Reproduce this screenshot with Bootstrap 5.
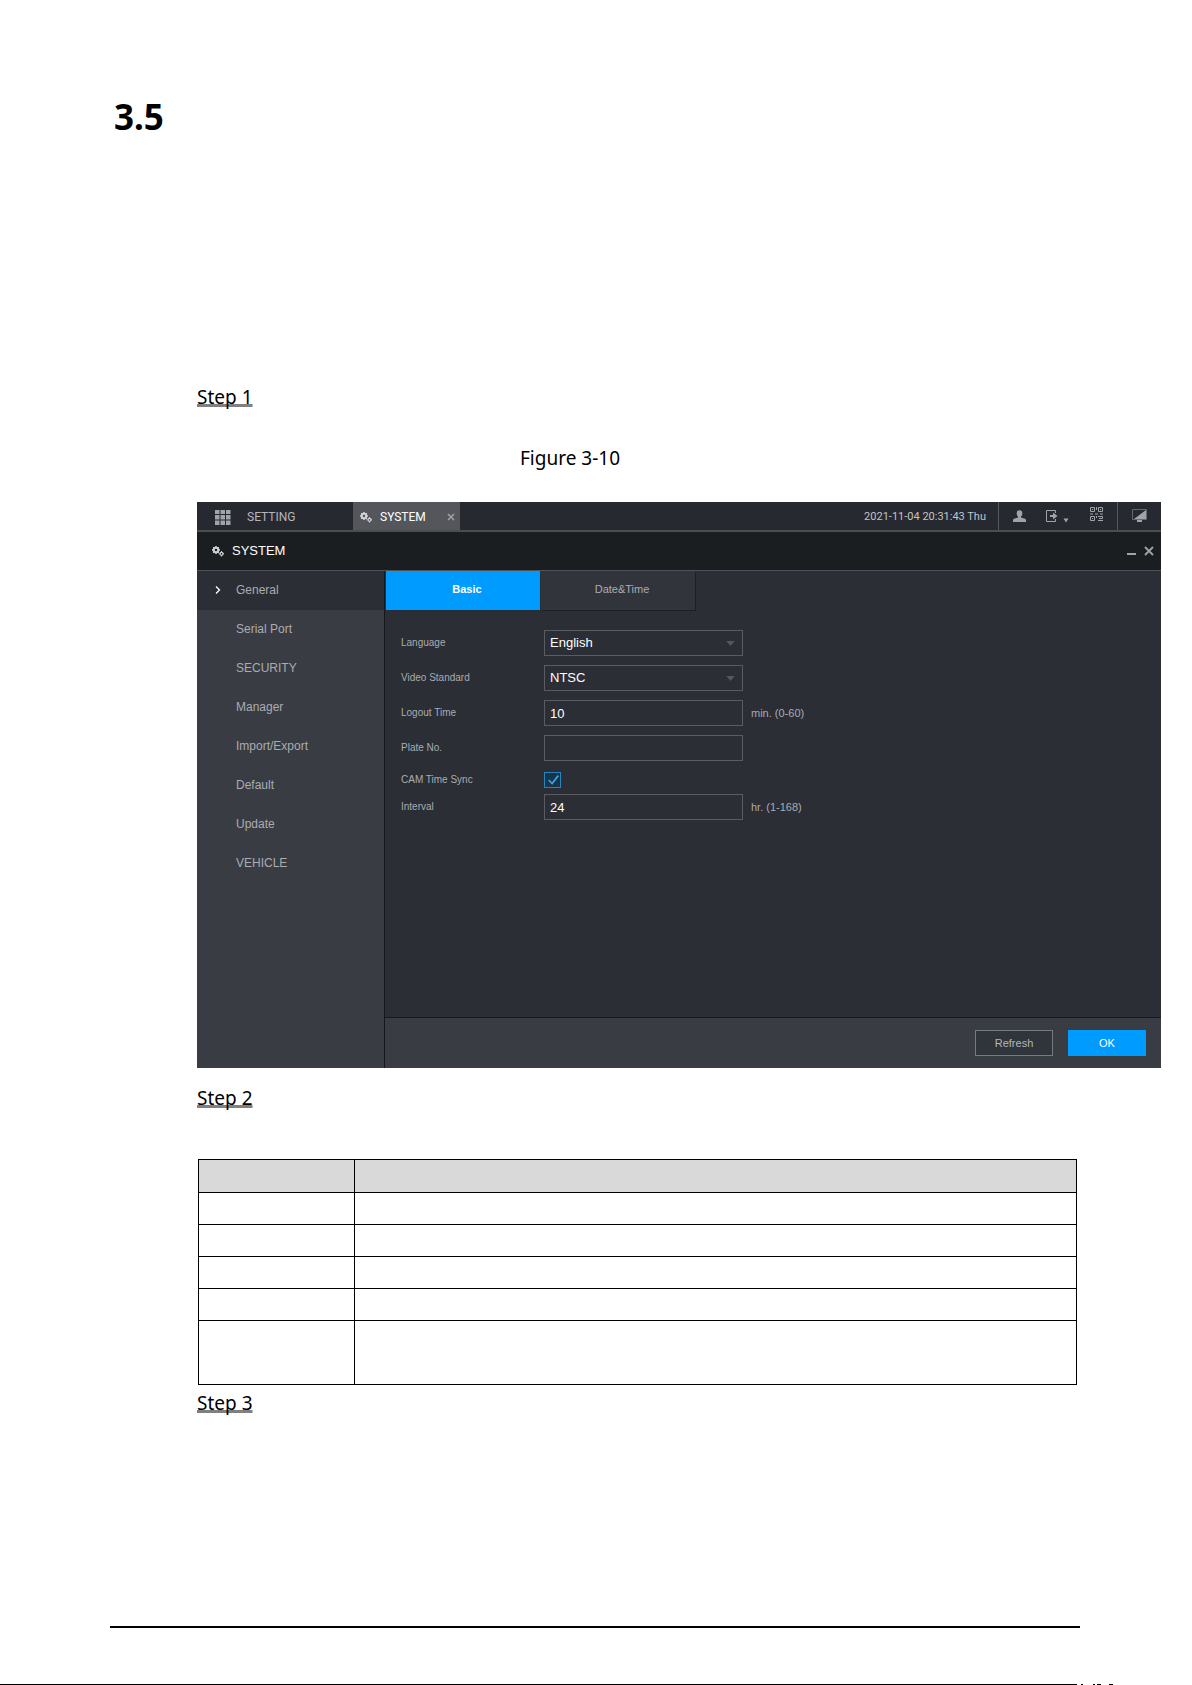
<!DOCTYPE html>
<html lang="en">
<head>
    <meta charset="UTF-8">
    <meta name="viewport" content="width=device-width, initial-scale=1.0">
    <title>3.5 System Settings</title>
    <!-- Bootstrap CSS -->
    <link href="https://cdn.jsdelivr.net/npm/bootstrap@5.3.0/dist/css/bootstrap.min.css" rel="stylesheet">
    <!-- Custom CSS -->
    <style>
        body {
            background-color: #fff;
            color: #000;
            font-family: 'Noto Sans', sans-serif;
        }
        .sheet {
            min-height: 100vh;
        }
        .sheet-body {
            padding: 93px 31px 0 114px;
        }
        .section-no {
            font-size: 35px;
            font-weight: 700;
            line-height: 48px;
            margin-bottom: 238px;
        }
        .steps {
            padding-left: 83px;
        }
        .step-title {
            font-size: 19px;
            font-weight: 400;
            line-height: 36px;
            margin: 0;
            text-decoration: underline 3px #808080;
            text-decoration-skip-ink: none;
            text-underline-offset: 0;
        }
        .figure-title {
            font-size: 19px;
            line-height: 36px;
            margin: 25px 0 26px;
            padding-left: 323px;
        }

        /* Recorder window */
        .dvr {
            background-color: #2b2e35;
            color: #a9acb1;
            font-family: 'Liberation Sans', Arial, sans-serif;
            font-size: 12px;
            line-height: 16px;
            margin-bottom: 12px;
        }
        .dvr button, .dvr input, .dvr select {
            font-family: inherit;
            border-radius: 0;
        }
        .icon-btn {
            background: none;
            border: 0;
            padding: 0;
            color: #a0a3a8;
            display: flex;
            align-items: center;
        }
        .top-bar {
            height: 30px;
            background-color: #272931;
            border-bottom: 2px solid #4b4d50;
            font-family: Roboto, sans-serif;
        }
        .menu-link, .open-tab, .clock {
            padding-top: 2px;
        }
        .menu-link {
            color: #b4b6ba;
            text-decoration: none;
            padding-left: 18px;
            width: 156px;
            gap: 16px;
        }
        .open-tab {
            background-color: #54565b;
            color: #fff;
            width: 107px;
            padding-left: 7px;
            padding-right: 5px;
            gap: 8px;
        }
        .clock {
            font-size: 11px;
            padding-right: 12px;
            color: #c2c4c8;
        }
        .tools {
            border-left: 1px solid #55575b;
            padding: 0 14px;
            gap: 20px;
        }
        .title-bar {
            height: 39px;
            background-color: #1b1e21;
            border-bottom: 1px solid #505356;
            color: #fff;
            font-size: 13px;
            padding: 0 7px 0 15px;
            gap: 8px;
        }
        .gear-icon {
            color: #d0d2d5;
        }
        .side-menu {
            width: 188px;
            background-color: #3a3c44;
            border-right: 1px solid #15171a;
        }
        .side-menu a {
            display: flex;
            align-items: center;
            height: 39px;
            padding: 0 0 2px 39px;
            color: #a9acb1;
            text-decoration: none;
        }
        .side-menu a.current {
            background-color: #2b2e35;
            padding-left: 18px;
            gap: 15px;
        }
        .main-area {
            min-height: 497px;
        }
        .page-tabs {
            gap: 1px;
            padding-left: 1px;
        }
        .page-tabs button {
            width: 154px;
            height: 39px;
            padding: 0 0 4px 8px;
            border: 0;
            font-size: 11px;
            color: #a9acb1;
            background-color: #32343c;
            box-shadow: 1px 1px 0 #1d1f24;
        }
        .page-tabs button.current {
            background-color: #009bff;
            color: #fff;
            font-weight: 700;
            box-shadow: none;
        }
        .settings {
            padding: 20px 16px;
        }
        .field-row {
            min-height: 26px;
            margin-bottom: 9px;
            font-size: 11px;
        }
        .field-row label {
            width: 143px;
            font-size: 10px;
        }
        .field-row .form-control, .field-row .form-select {
            width: 199px;
            height: 26px;
            padding: 0 5px;
            margin-right: 8px;
            font-size: 13px;
            line-height: 16px;
            color: #fff;
            background-color: #2b2e35;
            border: 1px solid #5a5c62;
        }
        .field-row .form-select {
            background-image: url("data:image/svg+xml,%3Csvg xmlns='http://www.w3.org/2000/svg' viewBox='0 0 10 6'%3E%3Cpath fill='%2355585e' d='M0 0h10L5 6z'/%3E%3C/svg%3E");
            background-size: 9px 5px;
            background-position: right 7px center;
        }
        .field-row.sync-row {
            min-height: 16px;
            margin: 11px 0 6px;
        }
        .sync-row .form-check-input {
            width: 17px;
            height: 16px;
            margin: 0;
            background-color: #173448;
            border: 1px solid #2785bd;
        }
        .sync-row .form-check-input[type=checkbox] {
            border-radius: 0;
        }
        .sync-row .form-check-input:checked {
            background-image: url("data:image/svg+xml,%3Csvg xmlns='http://www.w3.org/2000/svg' viewBox='0 0 16 16'%3E%3Cpath fill='none' stroke='%233da3e3' stroke-width='2' d='M3 8l4 4 7-9'/%3E%3C/svg%3E");
        }
        .action-bar {
            height: 51px;
            background-color: #3a3c44;
            border-top: 1px solid #15171a;
            padding-right: 15px;
            gap: 15px;
        }
        .action-bar .btn {
            width: 78px;
            height: 26px;
            padding: 0;
            font-size: 11px;
            color: #b4b6ba;
            background-color: #30343b;
            border: 1px solid #777a7f;
        }
        .action-bar .btn.btn-ok {
            color: #fff;
            background-color: #009bff;
            border-color: #009bff;
        }

        /* Parameter table */
        .param-table {
            width: calc(100% - 85px);
            margin: 43px 0 0 1px;
            border-collapse: collapse;
            table-layout: fixed;
        }
        .param-table th, .param-table td {
            border: 1px solid #000;
            height: 32px;
            padding: 0;
        }
        .param-table th {
            background-color: #d9d9d9;
            height: 33px;
        }
        .param-table tr.tall td {
            height: 64px;
        }
        .name-col {
            width: 156px;
        }
        .foot-rule {
            margin: 0 112px 56px 110px;
            border-top: 2px solid #000;
        }
        .edge-line {
            height: 1px;
        }
        .edge-line div {
            background-color: #000;
        }
        .edge-line svg {
            width: 115px;
        }
    </style>
</head>
<body>

<!-- Shared icon -->
<svg width="0" height="0" class="d-none">
    <symbol id="gears" viewBox="0 0 24 22">
        <circle cx="8" cy="8" r="4.5" fill="none" stroke="currentColor" stroke-width="4"/>
        <path d="M8 0v3M8 13v3M0 8h3M13 8h3M2.500 2.500l2 2M11.500 11.500l2 2M2.500 13.500l2-2M11.500 4.500l2-2" stroke="currentColor" stroke-width="3"/>
        <circle cx="19" cy="15.500" r="3" fill="none" stroke="currentColor" stroke-width="2.500"/>
        <path d="M19 10v2M19 19v2M13.500 15.500h2M22 15.500h2" stroke="currentColor" stroke-width="2"/>
    </symbol>
</svg>

<div class="sheet d-flex flex-column">
    <main class="sheet-body">
        <h1 class="section-no">3.5</h1>
        <div class="steps">
            <h2 class="step-title">Step 1</h2>
            <p class="figure-title">Figure 3-10</p>

            <section class="dvr">
                <div class="top-bar d-flex align-items-stretch">
                    <a href="#" class="menu-link d-flex align-items-center">
                        <svg width="16" height="15" viewBox="0 0 16 15" fill="#a0a3a8"><path d="M0 0h4.500v4H0zM5.500 0H10v4H5.500zM11 0h4.500v4H11zM0 5h4.500v4.500H0zM5.500 5H10v4.500H5.500zM11 5h4.500v4.500H11zM0 10.500h4.500v4.500H0zM5.500 10.500H10v4.500H5.500zM11 10.500h4.500v4.500H11z"/></svg>
                        SETTING
                    </a>
                    <div class="open-tab d-flex align-items-center">
                        <svg class="gear-icon" width="12" height="11"><use href="#gears"/></svg>
                        <span>SYSTEM</span>
                        <button type="button" class="icon-btn ms-auto" aria-label="Close tab">
                            <svg width="8" height="8" viewBox="0 0 8 8" stroke="currentColor" stroke-width="1.500"><path d="M1 1l6 6M7 1l-6 6"/></svg>
                        </button>
                    </div>
                    <div class="clock ms-auto d-flex align-items-center">2021-11-04 20:31:43 Thu</div>
                    <div class="tools d-flex">
                        <button type="button" class="icon-btn" aria-label="User">
                            <svg width="13" height="12" viewBox="0 0 13 12" fill="currentColor"><ellipse cx="6.500" cy="3.500" rx="2.800" ry="3.300"/><path d="M5 6h3v1.500l4 1.300q1 .4 1 1.600V12H0v-1.600q0-1.200 1-1.600l4-1.300z"/></svg>
                        </button>
                        <button type="button" class="icon-btn" aria-label="Log out">
                            <svg width="24" height="14" viewBox="0 0 24 14"><path d="M9.500 4V1.500h-9v11h9V10" fill="none" stroke="currentColor"/><path d="M4 6h3V3.500L11.500 7 7 10.500V8H4zM17.500 9.500h5l-2.500 4z" fill="currentColor"/></svg>
                        </button>
                        <button type="button" class="icon-btn pb-1" aria-label="QR code">
                            <svg width="13" height="14" viewBox="0 0 13 14" fill="none" stroke="currentColor"><path d="M.5 .5h4v4h-4zM8.500 .5h4v4h-4zM.5 9.500h4v4h-4zM2 2.500h1M10 2.500h1M2 11.500h1M0 7h3M5 7h3M10 7h3M6.500 0v3M6.500 9v2M8 9.500h4.500v2H9M8 13.500h5"/></svg>
                        </button>
                    </div>
                    <div class="tools d-flex">
                        <button type="button" class="icon-btn" aria-label="Display">
                            <svg width="15" height="14" viewBox="0 0 15 14"><path d="M.5 .5h14v10H.5z" fill="none" stroke="#65686d"/><path d="M14 1v9H2zM5 11h5v2H5z" fill="currentColor"/></svg>
                        </button>
                    </div>
                </div>

                <div class="title-bar d-flex align-items-center">
                    <svg class="gear-icon" width="12" height="11"><use href="#gears"/></svg>
                    <span>SYSTEM</span>
                    <button type="button" class="icon-btn ms-auto" aria-label="Minimize">
                        <svg width="9" height="10" viewBox="0 0 9 10" stroke="currentColor" stroke-width="2"><path d="M0 8h9"/></svg>
                    </button>
                    <button type="button" class="icon-btn" aria-label="Close">
                        <svg width="10" height="10" viewBox="0 0 10 10" stroke="currentColor" stroke-width="1.800"><path d="M1 1l8 8M9 1L1 9"/></svg>
                    </button>
                </div>

                <div class="d-flex">
                    <nav class="side-menu flex-shrink-0">
                        <a href="#" class="current">
                            <svg width="6" height="8" viewBox="0 0 6 8" fill="none" stroke="#fff" stroke-width="1.300"><path d="M1 .5L4.500 4 1 7.500"/></svg>
                            General
                        </a>
                        <a href="#">Serial Port</a>
                        <a href="#">SECURITY</a>
                        <a href="#">Manager</a>
                        <a href="#">Import/Export</a>
                        <a href="#">Default</a>
                        <a href="#">Update</a>
                        <a href="#">VEHICLE</a>
                    </nav>
                    <div class="main-area flex-grow-1 d-flex flex-column">
                        <div class="page-tabs d-flex">
                            <button type="button" class="current">Basic</button>
                            <button type="button">Date&amp;Time</button>
                        </div>
                        <form class="settings">
                            <div class="field-row d-flex align-items-center">
                                <label for="language">Language</label>
                                <select class="form-select" id="language">
                                    <option>English</option>
                                </select>
                            </div>
                            <div class="field-row d-flex align-items-center">
                                <label for="videoStandard">Video Standard</label>
                                <select class="form-select" id="videoStandard">
                                    <option>NTSC</option>
                                </select>
                            </div>
                            <div class="field-row d-flex align-items-center">
                                <label for="logoutTime">Logout Time</label>
                                <input type="text" class="form-control" id="logoutTime" value="10">
                                <span>min. (0-60)</span>
                            </div>
                            <div class="field-row d-flex align-items-center">
                                <label for="plateNo">Plate No.</label>
                                <input type="text" class="form-control" id="plateNo">
                            </div>
                            <div class="field-row sync-row d-flex align-items-center">
                                <label for="camSync">CAM Time Sync</label>
                                <input type="checkbox" class="form-check-input" id="camSync" checked>
                            </div>
                            <div class="field-row d-flex align-items-center">
                                <label for="interval">Interval</label>
                                <input type="text" class="form-control" id="interval" value="24">
                                <span>hr. (1-168)</span>
                            </div>
                        </form>
                        <div class="action-bar mt-auto d-flex justify-content-end align-items-center">
                            <button type="button" class="btn">Refresh</button>
                            <button type="button" class="btn btn-ok">OK</button>
                        </div>
                    </div>
                </div>
            </section>

            <h2 class="step-title">Step 2</h2>
            <table class="param-table">
                <colgroup>
                    <col class="name-col">
                    <col>
                </colgroup>
                <thead>
                    <tr><th></th><th></th></tr>
                </thead>
                <tbody>
                    <tr><td></td><td></td></tr>
                    <tr><td></td><td></td></tr>
                    <tr><td></td><td></td></tr>
                    <tr><td></td><td></td></tr>
                    <tr class="tall"><td></td><td></td></tr>
                </tbody>
            </table>
            <h2 class="step-title">Step 3</h2>
        </div>
    </main>

    <footer class="mt-auto">
        <div class="foot-rule"></div>
        <div class="edge-line d-flex">
            <div class="flex-grow-1"></div>
            <svg height="1" viewBox="0 0 115 1"><path d="M4 0h2v1H4zM16 0h2v1h-2zM20 0h4v1h-4zM32 0h4v1h-4z"/></svg>
        </div>
    </footer>
</div>

<!-- Bootstrap JS -->
<script src="https://cdn.jsdelivr.net/npm/bootstrap@5.3.0/dist/js/bootstrap.bundle.min.js"></script>
</body>
</html>
